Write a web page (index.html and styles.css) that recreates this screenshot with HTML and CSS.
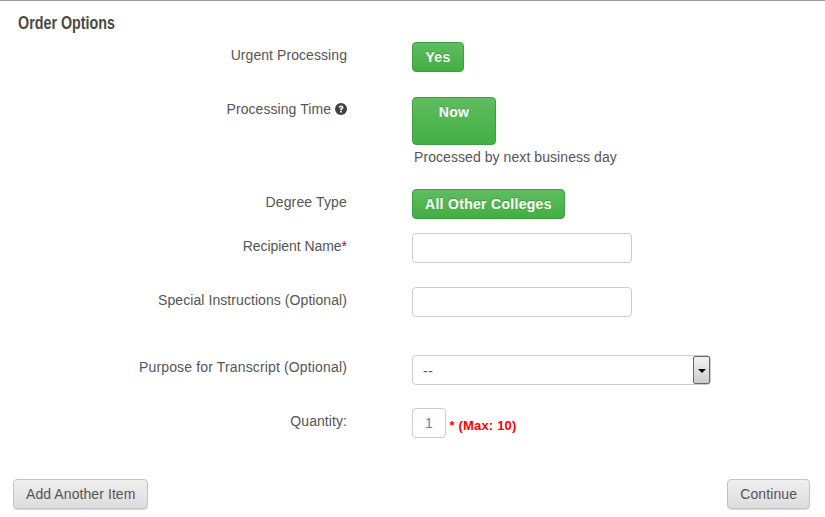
FILE: index.html
```html
<!DOCTYPE html>
<html lang="en">
<head>
  <meta charset="UTF-8">
  <title>Order Options</title>
  <link rel="stylesheet" href="styles.css">
</head>
<body>

  <div class="container">
    <h2>Order Options</h2>

    <form class="order-form">
      <!-- Urgent -->
      <div class="form-row row-urgent">
        <label>Urgent Processing</label>
        <div class="field"><button type="button" class="btn-green btn-yes">Yes</button></div>
      </div>

      <!-- Processing time -->
      <div class="form-row row-time">
        <label>Processing Time
          <svg class="help-icon" viewBox="0 0 12 12" width="12" height="12">
            <circle cx="6" cy="6" r="6" fill="#453f3a"/>
            <path d="M3.6 4.6C3.7 3.2 4.8 2.4 6.1 2.4c1.4 0 2.4.8 2.4 2 0 .9-.5 1.4-1.1 1.8-.4.3-.6.5-.6.9H5.1c0-.9.2-1.3.9-1.8.4-.3.7-.5.7-.8 0-.3-.3-.6-.7-.6-.5 0-.8.3-.9.9z" fill="#fff"/>
            <rect x="5.1" y="7.8" width="1.7" height="1.7" fill="#fff"/>
          </svg>
        </label>
        <div class="field">
          <button type="button" class="btn-green btn-now">Now</button>
          <div class="hint">Processed by next business day</div>
        </div>
      </div>

      <!-- Degree -->
      <div class="form-row row-degree">
        <label>Degree Type</label>
        <div class="field"><button type="button" class="btn-green">All Other Colleges</button></div>
      </div>

      <div class="form-row row-recipient">
        <label>Recipient Name<span class="req">*</span></label>
        <div class="field"><input type="text" class="text-input"></div>
      </div>

      <div class="form-row row-special">
        <label>Special Instructions (Optional)</label>
        <div class="field"><input type="text" class="text-input"></div>
      </div>

      <div class="form-row row-purpose">
        <label>Purpose for Transcript (Optional)</label>
        <div class="field">
          <div class="select-box">
            <span class="select-value">--</span>
            <span class="select-arrow"></span>
          </div>
        </div>
      </div>

      <div class="form-row row-qty">
        <label>Quantity:</label>
        <div class="field qty-field">
          <input type="text" class="qty-input" value="1">
          <span class="qty-note">* (Max: 10)</span>
        </div>
      </div>
    </form>

    <div class="actions">
      <button type="button" class="btn-gray">Add Another Item</button>
      <button type="button" class="btn-gray">Continue</button>
    </div>
  </div>

</body>
</html>
```

FILE: styles.css
```css
/* General Styles */
body {
  font-family: "Liberation Sans", Arial, sans-serif;
  font-size: 14px;
  color: #555;
  background-color: #fff;
  margin: 0;
}

.container {
  border-top: 1px solid #999;
  height: 516px;
  box-sizing: border-box;
  padding: 0 15px 0 13px;
}

h2 {
  font-size: 18px;
  line-height: 20px;
  font-weight: bold;
  color: #4a4a44;
  margin: 12px 0 0 5px;
  transform: scaleX(0.795);
  transform-origin: left;
}

/* Form rows */
.form-row {
  display: flex;
}

.form-row label {
  width: 334px;
  text-align: right;
  line-height: 20px;
  letter-spacing: 0.07px;
  flex-shrink: 0;
}

.field {
  margin-left: 65px;
}

.row-urgent { margin-top: 9px; height: 55px; }
.row-urgent label { padding-top: 3px; }
.row-time { height: 92px; }
.row-time label { padding-top: 2px; }
.row-degree { height: 44px; }
.row-degree label { padding-top: 3px; letter-spacing: 0.15px; }
.row-recipient { height: 54px; }
.row-recipient label { padding-top: 3px; letter-spacing: -0.05px; }
.row-special { height: 68px; }
.row-special label { padding-top: 3px; }
.row-purpose { height: 53px; }
.row-purpose label { padding-top: 2px; letter-spacing: 0.15px; }
.row-qty label { padding-top: 3px; }

.req { color: #c00; }

.help-icon {
  vertical-align: -1px;
}

/* Green buttons */
.btn-green {
  display: block;
  height: 30px;
  padding: 0 12px;
  border: 1px solid #3d9f40;
  border-radius: 4px;
  background: linear-gradient(#5fbd5f, #43ae42);
  color: #fff;
  font-family: inherit;
  font-size: 14px;
  font-weight: bold;
  letter-spacing: 0.3px;
  text-shadow: 0 -1px 0 rgba(0, 0, 0, 0.2);
}

.btn-yes {
  width: 52px;
  padding: 0;
}

.btn-now {
  width: 84px;
  height: 48px;
  padding: 0 0 19px;
}

.hint {
  margin: 2px 0 0 2px;
  line-height: 20px;
  letter-spacing: 0.07px;
}

/* Inputs */
.text-input {
  display: block;
  width: 220px;
  height: 30px;
  box-sizing: border-box;
  border: 1px solid #ccc;
  border-radius: 4px;
}

.select-box {
  display: flex;
  justify-content: space-between;
  width: 299px;
  height: 30px;
  box-sizing: border-box;
  border: 1px solid #ccc;
  border-radius: 4px;
}

.select-value {
  padding: 5px 0 0 10px;
  line-height: 20px;
  font-size: 14px;
  letter-spacing: 0.5px;
}

.select-arrow {
  width: 17px;
  height: 28px;
  box-sizing: border-box;
  border: 1px solid #666;
  border-radius: 2px;
  background: linear-gradient(#f4f4f4, #ccc);
  position: relative;
}

.select-arrow::after {
  content: "";
  position: absolute;
  left: 4px;
  top: 12px;
  border-top: 4px solid #000;
  border-left: 4px solid transparent;
  border-right: 4px solid transparent;
}

.qty-field {
  display: flex;
  align-items: flex-start;
}

.qty-input {
  width: 34px;
  height: 30px;
  box-sizing: border-box;
  border: 1px solid #ccc;
  border-radius: 4px;
  text-align: center;
  font-family: inherit;
  font-size: 14px;
  color: #5f86a3;
  padding: 0;
}

.qty-note {
  color: #f00;
  font-size: 13px;
  font-weight: bold;
  letter-spacing: 0.18px;
  margin: 10px 0 0 3.5px;
  line-height: 16px;
}

/* Bottom actions */
.actions {
  display: flex;
  justify-content: space-between;
  margin-top: 41px;
}

.btn-gray {
  height: 30px;
  padding: 0 12px;
  border: 1px solid #c4c4c4;
  border-radius: 4px;
  background: linear-gradient(#f0f0f0, #dcdcdc);
  color: #555;
  font-family: inherit;
  font-size: 14px;
  letter-spacing: 0.08px;
  box-shadow: 0 1px 1px rgba(0, 0, 0, 0.15);
}
```
